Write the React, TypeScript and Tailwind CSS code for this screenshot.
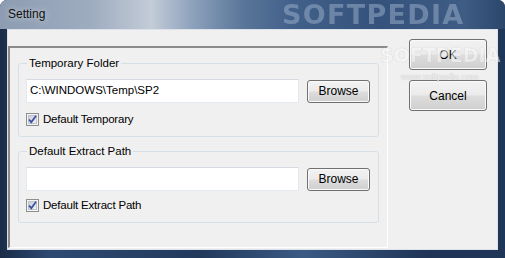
import React from 'react';

const Check: React.FC = () => (
  <svg width="13" height="13" viewBox="0 0 13 13" className="shrink-0">
    <defs>
      <linearGradient id="cbg" x1="0" y1="0" x2="1" y2="1">
        <stop offset="0" stopColor="#c6cbd3" />
        <stop offset="1" stopColor="#f4f5f7" />
      </linearGradient>
    </defs>
    <rect x="0.5" y="0.5" width="12" height="12" fill="#f4f4f4" stroke="#8e8f8f" />
    <rect x="2.5" y="2.5" width="8" height="8" fill="url(#cbg)" stroke="#bfc4cb" />
    <path d="M3 6.5 L5.3 9.2 L10 2.8" fill="none" stroke="#3d52a0" strokeWidth="1.8" />
  </svg>
);

const Button: React.FC<{ label: string; className?: string }> = ({ label, className }) => (
  <button
    type="button"
    className={`flex items-center justify-center rounded-[3px] border border-[#707070] bg-[linear-gradient(to_bottom,#f2f2f2_0%,#ebebeb_48%,#dddddd_52%,#cfcfcf_100%)] shadow-[inset_0_0_0_1px_#fafafa] text-[12px] text-black ${className ?? ''}`}
  >
    {label}
  </button>
);

const Group: React.FC<{ title: string; value: string; checkLabel: string; className?: string; gap?: string }> = ({
  title,
  value,
  checkLabel,
  className,
  gap,
}) => (
  <fieldset className={`w-[361px] rounded-[3px] border border-[#d5dfe5] pl-[7px] pr-[8px] pt-[9px] pb-[10px] ${className ?? ''}`}>
    <legend className="ml-[1px] px-[2px] text-[11.5px] leading-[13px] text-black">{title}</legend>
    <div className="flex items-center">
      <div className="flex h-[24px] w-[273px] items-center border border-[#e3e9ef] border-t-[#d5dae0] bg-white pl-[3px] text-[11.5px] text-black">
        {value}
      </div>
      <Button label="Browse" className="ml-[8px] h-[23px] w-[63px]" />
    </div>
    <div className={`${gap ?? 'mt-[10px]'} flex items-center gap-[4px] text-[11.5px] leading-[13px] tracking-[-0.2px] text-black`}>
      <Check />
      <span>{checkLabel}</span>
    </div>
  </fieldset>
);

export default function App() {
  return (
    <div className="relative flex h-[258px] w-[505px] flex-col overflow-hidden rounded-t-[7px] bg-[linear-gradient(to_right,#1a2c48_0%,#2e4a72_10%,#22395c_40%,#3a5a84_60%,#1f3456_85%,#203658_100%)] font-['Liberation_Sans',Arial,sans-serif]">
      {/* title bar */}
      <div className="relative flex h-[29px] shrink-0 items-center bg-[linear-gradient(to_right,#8d9cb1_0%,#9eacc0_18%,#c3ccd7_30%,#8ea2bd_38%,#5a7699_48%,#41608a_58%,#34527b_75%,#3e5c84_92%,#2c466b_100%)] pl-[8px] pb-[2px]">
        <span className="text-[12px] text-[#101010] [text-shadow:0_0_6px_rgba(255,255,255,0.7)]">Setting</span>
        <span className="pointer-events-none absolute left-[282px] top-[1px] font-['DejaVu_Sans',sans-serif] text-[27px] font-bold leading-[28px] tracking-[1.3px] text-[#9fb2cb] opacity-50 blur-[0.6px]">
          SOFTPEDIA
        </span>
      </div>

      {/* client area */}
      <div className="ml-[7px] flex h-[221px] w-[491px] border border-[#dde2ea] bg-[#f0f0f0]">
        <div className="mt-[16px] mb-[1px] flex w-[380px] flex-col border-t-2 border-l-2 border-r border-b border-t-[#8a8a8a] border-l-[#8a8a8a] border-r-white border-b-white pl-[8px]">
          <Group className="mt-[9px]" title="Temporary Folder" value="C:\WINDOWS\Temp\SP2" checkLabel="Default Temporary" />
          <Group className="mt-[8px]" gap="mt-[8px]" title="Default Extract Path" value="" checkLabel="Default Extract Path" />
        </div>
        <div className="ml-[21px] mt-[9px] flex flex-col gap-[10px]">
          <Button label="OK" className="h-[31px] w-[78px]" />
          <Button label="Cancel" className="h-[31px] w-[78px]" />
        </div>
      </div>

      {/* watermark over the dialog */}
      <span className="pointer-events-none absolute left-[380px] top-[44px] font-['DejaVu_Sans',sans-serif] text-[19px] font-bold leading-[22px] text-[#f8f8f8] opacity-55 [text-shadow:0_0_1px_#b8b8b8,0_0_1px_#b8b8b8]">
        SOFTPEDIA
      </span>
      <span className="pointer-events-none absolute left-[401px] top-[72px] text-[9px] leading-[10px] text-[#f4f4f4] [text-shadow:0_0_1px_#a8a8a8]">
        www.softpedia.com
      </span>
    </div>
  );
}
